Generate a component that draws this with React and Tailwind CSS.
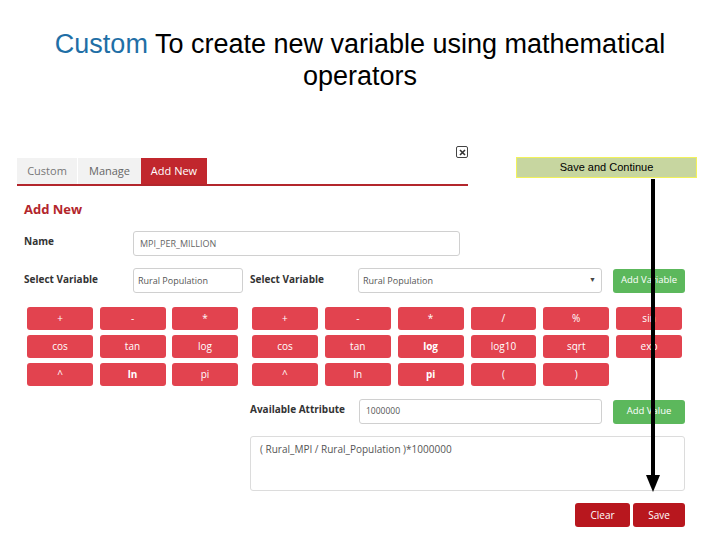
import React from "react";

const ui = { fontFamily: '"Open Sans", "Liberation Sans", sans-serif' };

function OpBtn({ children, bold }) {
  return (
    <div
      className={`h-[23px] rounded-[3px] bg-[#e2434f] text-white text-[10px] flex items-center justify-center ${bold ? "font-bold" : ""}`}
    >
      {children}
    </div>
  );
}

export default function App() {
  const left = ["+", "-", "*", "cos", "tan", "log", "^", "ln", "pi"];
  const right = [
    "+", "-", "*", "/", "%", "sin",
    "cos", "tan", "log", "log10", "sqrt", "exp",
    "^", "ln", "pi", "(", ")", null,
  ];
  const boldSet = new Set([8, 14]);
  const boldLeft = new Set([7]);
  return (
    <div className="w-[720px] h-[540px] bg-white relative overflow-hidden" style={ui}>
      <div
        className="pt-[28px] text-center text-[27px] leading-[32px] text-black"
        style={{ fontFamily: '"Liberation Sans", Arial, sans-serif' }}
      >
        <div>
          <span className="text-[#1f6fa6]">Custom</span> To create new variable using mathematical
        </div>
        <div>operators</div>
      </div>

      {/* tabs */}
      <div className="relative mt-[66px] ml-[17px] w-[451px] flex border-b-2 border-[#b3262c]">
        <div className="w-[60px] h-[26px] bg-[#f2f2f2] text-[#777] text-[11px] flex items-center justify-center">Custom</div>
        <div className="ml-[1px] w-[63px] h-[26px] bg-[#f2f2f2] text-[#666] text-[11px] flex items-center justify-center">Manage</div>
        <div className="w-[66px] h-[26px] bg-[#c1272d] text-white text-[11px] flex items-center justify-center">Add New</div>
        <div className="absolute left-[439px] top-[-12px] w-[12px] h-[12px] border-[1.5px] border-[#444] rounded-[2px] flex items-center justify-center">
          <svg width="7" height="7" viewBox="0 0 7 7">
            <path d="M1 1L6 6M6 1L1 6" stroke="#333" strokeWidth="1.6" />
          </svg>
        </div>
      </div>

      <div className="mt-[14px] ml-[24px] text-[13px] leading-[18px] font-bold text-[#b3262c]">Add New</div>

      {/* Name row */}
      <div className="mt-[13px] ml-[24px] flex items-center">
        <div className="w-[109px] text-[10px] font-bold text-[#333] -mt-[4px]">Name</div>
        <div className="w-[327px] h-[25px] border border-[#d0d0d0] rounded-[3px] flex items-center pl-[6px] text-[9px] text-[#666]">
          MPI_PER_MILLION
        </div>
      </div>

      {/* Select row */}
      <div className="mt-[12px] ml-[24px] flex items-center">
        <div className="w-[109px] text-[10px] font-bold text-[#333] -mt-[3px]">Select Variable</div>
        <div className="w-[110px] h-[25px] border border-[#d0d0d0] rounded-[3px] flex items-center pl-[4px] text-[9px] text-[#555]">
          Rural Population
        </div>
        <div className="ml-[7px] w-[108px] text-[10px] font-bold text-[#333] -mt-[3px]">Select Variable</div>
        <div className="w-[244px] h-[25px] border border-[#d0d0d0] rounded-[3px] flex items-center justify-between pl-[4px] pr-[5px] text-[9px] text-[#555]">
          <span>Rural Population</span>
          <span className="text-[7px] text-[#444]">▼</span>
        </div>
        <div className="ml-[11px] w-[72px] h-[24px] rounded-[3px] bg-[#5cb85c] text-white text-[9.5px] flex items-center justify-center">
          Add Variable
        </div>
      </div>

      {/* operator grids */}
      <div className="mt-[14px] flex">
        <div className="ml-[27px] w-[211px] grid grid-cols-3 gap-x-[6.5px] gap-y-[5px]">
          {left.map((t, i) => (
            <OpBtn key={i} bold={boldLeft.has(i)}>{t}</OpBtn>
          ))}
        </div>
        <div className="ml-[14px] w-[430px] grid grid-cols-6 gap-x-[7px] gap-y-[5px]">
          {right.map((t, i) =>
            t === null ? <div key={i} /> : <OpBtn key={i} bold={boldSet.has(i)}>{t}</OpBtn>
          )}
        </div>
      </div>

      {/* Available attribute */}
      <div className="mt-[13px] ml-[250px] flex items-center">
        <div className="w-[109px] text-[10px] font-bold text-[#333] -mt-[4px]">Available Attribute</div>
        <div className="w-[243px] h-[25px] border border-[#d0d0d0] rounded-[3px] flex items-center pl-[6px] text-[8.5px] text-[#555]">
          1000000
        </div>
        <div className="ml-[11px] w-[72px] h-[24px] rounded-[3px] bg-[#5cb85c] text-white text-[9.5px] flex items-center justify-center">
          Add Value
        </div>
      </div>

      <div className="mt-[12px] ml-[250px] w-[435px] h-[55px] border border-[#dcdcdc] rounded-[3px] pl-[9px] pt-[5px] text-[10px] text-[#555]">
        ( Rural_MPI / Rural_Population )*1000000
      </div>

      <div className="mt-[12px] ml-[575px] flex gap-[3px]">
        <div className="w-[55px] h-[24px] rounded-[3px] bg-[#b8171e] text-white text-[10px] flex items-center justify-center">Clear</div>
        <div className="w-[52px] h-[24px] rounded-[3px] bg-[#b8171e] text-white text-[10px] flex items-center justify-center">Save</div>
      </div>

      {/* overlay annotation */}
      <div
        className="absolute left-[516px] top-[157px] w-[181px] h-[21px] bg-[#c7d6a0] border border-[#f2f25a] flex items-center justify-center text-[11px] text-black"
        style={{ fontFamily: '"Liberation Sans", Arial, sans-serif' }}
      >
        Save and Continue
      </div>
      <svg className="absolute left-[644px] top-[179px]" width="18" height="315" viewBox="0 0 18 315">
        <rect x="7" y="0" width="4" height="300" fill="#000" />
        <path d="M2 296 L16 296 L9 313 Z" fill="#000" />
      </svg>
    </div>
  );
}
